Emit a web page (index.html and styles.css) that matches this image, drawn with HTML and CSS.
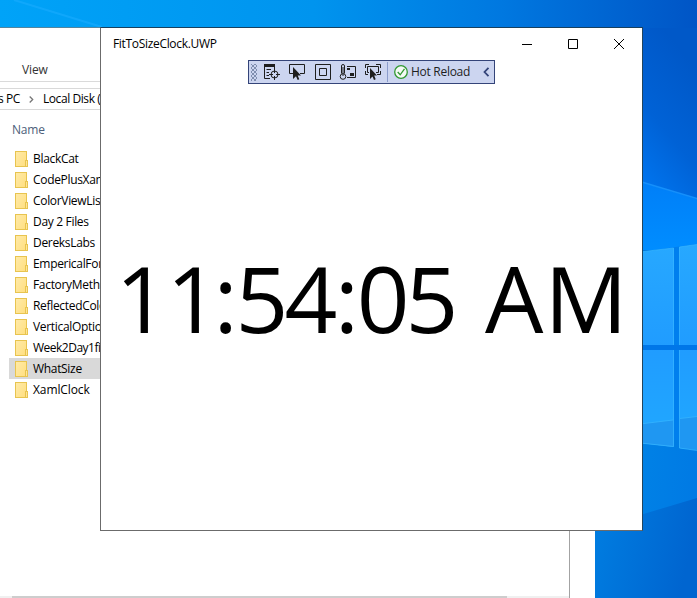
FILE: index.html
```html
<!DOCTYPE html>
<html lang="en">
<head>
<meta charset="utf-8">
<title>FitToSizeClock.UWP</title>
<link rel="stylesheet" href="styles.css">
</head>
<body>
<div class="desktop">
  <svg class="wallpaper" width="697" height="598" viewBox="0 0 697 598" aria-hidden="true">
    <defs>
      <linearGradient id="top" x1="0" x2="1" y1="0" y2="0"><stop offset="0" stop-color="#00a3f8"/><stop offset=".45" stop-color="#0094ee"/><stop offset=".72" stop-color="#0078e0"/><stop offset="1" stop-color="#0055c6"/></linearGradient>
      <linearGradient id="side" x1=".4" x2="0" y1="0" y2="1"><stop offset="0" stop-color="#0058c8"/><stop offset=".5" stop-color="#0062d6"/><stop offset="1" stop-color="#0079f4"/></linearGradient>
      <linearGradient id="beam" x1="0" x2="0" y1="0" y2="1"><stop offset="0" stop-color="#007ff8"/><stop offset="1" stop-color="#008dff"/></linearGradient>
      <linearGradient id="pane" x1="0" x2="0" y1="0" y2="1"><stop offset="0" stop-color="#27a8ff"/><stop offset=".5" stop-color="#209cff"/><stop offset="1" stop-color="#20a9ff"/></linearGradient>
      <linearGradient id="low" x1="0" x2="1" y1="0" y2=".15"><stop offset="0" stop-color="#0088e8"/><stop offset="1" stop-color="#007ae4"/></linearGradient>
      <linearGradient id="floor" x1="0" x2="1" y1="0" y2=".2"><stop offset="0" stop-color="#007fe2"/><stop offset="1" stop-color="#0065d0"/></linearGradient>
    </defs>
    <path fill="url(#top)" d="M0 0H697V40H0z"/>
    <path stroke="#1aacff" stroke-width="2" opacity=".6" d="M14 0 102 27"/>
    <path fill="url(#side)" d="M640 28H697V200H640z"/>
    <path fill="url(#beam)" d="M640 182 697 199V250H640z"/>
    <path stroke="#1590fb" stroke-width="1.5" d="M640 181.500 697 198.500"/>
    <path fill="#007fee" d="M640 252 697 244V460H640z"/>
    <path fill="url(#low)" d="M590 440H697V598H590z"/>
    <path fill="url(#floor)" d="M590 530 697 498V598H590z"/>
    <path fill="url(#pane)" d="M640 252 674 248V345H640zM679 247 697 244.500V345H679zM640 350H674V447L640 443zM679 350H697V450L679 448z"/>
    <path fill="#1f97f2" d="M640 424 674 420V447L640 443zM679 418.500 697 416.500V450L679 448z"/>
    <path fill="none" stroke="#38b6ff" stroke-opacity=".7" d="M640 252 673.500 248V345M679.500 345V247L697 244.500M673.500 350V446.500L640 443M679.500 350V448L697 450.500M640 424 673 420M680 418.500 697 416.500"/>
    <path fill="#0076e8" d="M640 345H697V350H640z"/>
  </svg>

  <section class="explorer">
    <div class="ribbon"><span>View</span></div>
    <div class="address"><span>s PC</span><svg width="5" height="7" viewBox="0 0 5 7"><path d="M.7.5 3.700 3.500.7 6.500"/></svg><span>Local Disk (C:)</span></div>
    <div class="files">
      <div class="column-name">Name</div>
      <ul>
        <li><i class="folder"></i>BlackCat</li>
        <li><i class="folder"></i>CodePlusXaml</li>
        <li><i class="folder"></i>ColorViewList</li>
        <li><i class="folder"></i>Day 2 Files</li>
        <li><i class="folder"></i>DereksLabs</li>
        <li><i class="folder"></i>EmpericalForms</li>
        <li><i class="folder"></i>FactoryMethod</li>
        <li><i class="folder"></i>ReflectedColors</li>
        <li><i class="folder"></i>VerticalOptions</li>
        <li class="tight"><i class="folder"></i>Week2Day1files</li>
        <li class="selected"><i class="folder"></i>WhatSize</li>
        <li class="loose"><i class="folder"></i>XamlClock</li>
      </ul>
      <div class="scrollbar"><div class="thumb"></div></div>
    </div>
  </section>

  <main class="window">
    <header class="titlebar">
      <h1>FitToSizeClock.UWP</h1>
      <div class="controls">
        <svg viewBox="0 0 46 32"><path d="M17 16.500H27"/></svg>
        <svg viewBox="0 0 46 32"><path d="M17.500 11.500H26.500V20.500H17.500z"/></svg>
        <svg viewBox="0 0 46 32"><path d="M17 11 27 21M27 11 17 21"/></svg>
      </div>
    </header>
    <div class="toolbar">
      <div class="grip"></div>
      <div class="tools">
        <svg viewBox="0 0 18 18"><path class="fill" d="M2 1H13V4H2z"/><path d="M2.500 3V15.500H8M4.500 6.500H9M4.500 9.500H7M4.500 12.500H7M12.500 4V6"/><circle cx="12.500" cy="11.500" r="3.500"/><path d="M12.500 6V10M12.500 13V17M7 11.500H11M14 11.500H18"/></svg>
        <svg viewBox="0 0 18 18"><path d="M5.500 10.500H1.500V1.500H16.500V10.500H12"/><path class="fill" d="M5 4V16L8 13.200 9.700 17 11.300 16.200 9.700 12.600H13z"/></svg>
        <svg viewBox="0 0 18 18"><path d="M1.500 1.500H16.500V16.500H1.500zM5.500 5.500H12.500V12.500H5.500z"/></svg>
        <svg viewBox="0 0 18 18"><path d="M2.500 10.500V3Q2.500 1.500 4 1.500T5.500 3V10.500M8 3.500H16.500V14.500H8"/><circle cx="4" cy="13.500" r="2.800"/><path d="M4 4V13"/><path class="fill" d="M8 5H11V7H8zM11 10H15V13H11z"/></svg>
        <svg viewBox="0 0 18 18"><path d="M1.500 5V1.500H5M12 1.500H16.500V5M16.500 8V11.500H13M4 11.500H1.500V8M5 9.500H3.500V3.500H14.500V9.500H12"/><path class="fill" d="M6 5V16L8.500 13.400 10 17 11.700 16.200 10.200 12.600H13z"/></svg>
      </div>
      <div class="reload">
        <svg class="check" viewBox="0 0 14 14"><circle cx="7" cy="7" r="6.300"/><path d="M3.700 7 6.200 9.800 10.500 3.800"/></svg>
        <span>Hot Reload</span>
      </div>
      <svg class="collapse" viewBox="0 0 7 10"><path d="M5.500.8 1.500 5 5.500 9.200"/></svg>
    </div>
    <svg class="clock" viewBox="101 221 541 160"><text y="333" x="115.400 166.400 213.400 235.500 284.500 334.800 356.800 405.500 460 485 544.500">11:54:05 AM</text></svg>
  </main>
</div>
</body>
</html>
```
FILE: styles.css
```css
* { box-sizing: border-box; }
body { margin: 0; overflow: hidden; font: 12px/16px "Open Sans", sans-serif; color: #000; }
.desktop { position: relative; width: 697px; height: 598px; overflow: hidden; background: #0079df; }
.wallpaper { position: absolute; inset: 0; }

.explorer { position: absolute; left: 0; top: 27px; width: 595px; height: 571px; background: #fff; border-top: 1px solid #53859f; display: flex; flex-direction: column; letter-spacing: -.32px; white-space: nowrap; }
.ribbon { height: 54px; padding: 34px 0 0 22px; border-bottom: 1px solid #dadada; color: #333; letter-spacing: -.15px; }
.address { height: 22px; margin-top: 6px; border: solid #d9d9d9; border-width: 1px 0; display: flex; align-items: center; letter-spacing: -.42px; }
.address span:first-child { margin-left: -2px; }
.address svg { margin: 0 9px; fill: none; stroke: #777; stroke-width: 1.3; }
.files { width: 570px; margin-top: -1px; flex: 1; border-right: 1px solid #a3a3a3; display: flex; flex-direction: column; }
.column-name { height: 40px; padding: 13px 0 0 12px; color: #4c607a; letter-spacing: -.2px; }
ul { list-style: none; margin: -1px 0 0 9px; padding: 0; }
li { height: 21px; display: flex; align-items: center; padding-left: 6px; }
li.selected { background: #d9d9d9; }
li.tight { letter-spacing: -.5px; }
li.loose { letter-spacing: -.1px; }
.folder { position: relative; width: 12px; height: 16px; margin-right: 6px; border: 1px solid #e8c44f; background: linear-gradient(120deg, #ffeaa8, #ffdf80); }
.folder::after { content: ""; position: absolute; right: -2px; bottom: -1px; width: 1px; height: 5px; border: 1px solid #e8c44f; background: #ffe596; }
.scrollbar { height: 2px; margin-top: auto; padding-left: 12px; background: #f0f0f0; }
.thumb { width: 495px; height: 2px; background: #cdcdcd; }

.window { position: absolute; left: 100px; top: 27px; width: 543px; height: 504px; background: #fff; border: 1px solid #6b6b6b; border-top-color: #17405f; border-right-color: #24455c; display: flex; flex-direction: column; align-items: center; }
.titlebar { align-self: stretch; height: 32px; margin-right: -1px; padding-left: 12px; display: flex; justify-content: space-between; align-items: center; }
h1 { margin: 0; font: inherit; letter-spacing: -.32px; }
.controls { display: flex; }
.controls svg { width: 46px; height: 32px; fill: none; stroke: #000; }
.toolbar { width: 247px; height: 24px; border: 1px solid #344479; background: #ccd5f0; display: flex; align-items: center; }
.grip { width: 6px; height: 17px; margin-left: 2px; background: radial-gradient(circle, #7c8aad .7px, transparent .9px) 0 0 / 4px 4px, radial-gradient(circle, #7c8aad .7px, transparent .9px) 2px 2px / 4px 4px; }
.tools { display: flex; gap: 7.500px; margin-left: 5px; }
.tools svg { width: 18px; height: 18px; fill: none; stroke: #1e1e1e; }
.tools svg:nth-child(3) { margin: 0 -.5px 0 .5px; }
.tools .fill { fill: #1e1e1e; stroke: none; }
.reload { display: flex; align-items: center; height: 20px; margin-left: 5px; padding-left: 6px; border-left: 1px solid #8b9ccc; color: #1e1e1e; white-space: nowrap; letter-spacing: -.28px; }
.check { width: 14px; height: 14px; margin-right: 3px; fill: #f5faf5; stroke: #329932; stroke-width: 1.3; }
.collapse { width: 7px; height: 10px; margin: 0 4px 0 auto; fill: none; stroke: #344479; stroke-width: 1.8; }
.clock { width: 541px; height: 160px; margin-top: 137px; }
.clock text { font: 92.400px "Open Sans", sans-serif; fill: #000; }
```
